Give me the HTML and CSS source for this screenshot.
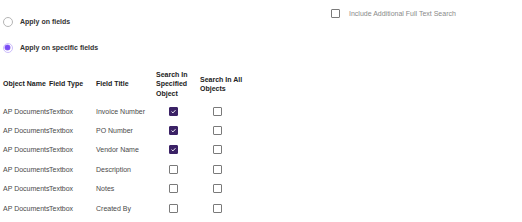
FILE: index.html
```html
<!DOCTYPE html>
<html lang="en">
<head>
    <meta charset="UTF-8">
    <title>Search Fields</title>
    <link rel="stylesheet" href="styles.css">
</head>
<body>
    <div class="page">
        <div class="options-row">
            <div class="radio-group">
                <label class="radio-option"><span class="radio"></span>Apply on fields</label>
                <label class="radio-option"><span class="radio on"></span>Apply on specific fields</label>
            </div>
            <label class="full-text"><span class="box"></span>Include Additional Full Text Search</label>
        </div>

        <table class="fields">
            <thead>
                <tr>
                    <th class="c-name">Object Name</th>
                    <th class="c-type">Field Type</th>
                    <th class="c-title">Field Title</th>
                    <th class="c-spec">Search In<br>Specified<br>Object</th>
                    <th class="c-all">Search In All<br>Objects</th>
                </tr>
            </thead>
            <tbody>
                <tr>
                    <td>AP Documents</td><td>Textbox</td><td>Invoice Number</td>
                    <td><span class="box checked"><svg viewBox="0 0 9 9"><path d="M2 4.6 L3.8 6.3 L7 2.8"/></svg></span></td>
                    <td><span class="box"></span></td>
                </tr>
                <tr>
                    <td>AP Documents</td><td>Textbox</td><td>PO Number</td>
                    <td><span class="box checked"><svg viewBox="0 0 9 9"><path d="M2 4.6 L3.8 6.3 L7 2.8"/></svg></span></td>
                    <td><span class="box"></span></td>
                </tr>
                <tr>
                    <td>AP Documents</td><td>Textbox</td><td>Vendor Name</td>
                    <td><span class="box checked"><svg viewBox="0 0 9 9"><path d="M2 4.6 L3.8 6.3 L7 2.8"/></svg></span></td>
                    <td><span class="box"></span></td>
                </tr>
                <tr>
                    <td>AP Documents</td><td>Textbox</td><td>Description</td>
                    <td><span class="box"></span></td>
                    <td><span class="box"></span></td>
                </tr>
                <tr>
                    <td>AP Documents</td><td>Textbox</td><td>Notes</td>
                    <td><span class="box"></span></td>
                    <td><span class="box"></span></td>
                </tr>
                <tr>
                    <td>AP Documents</td><td>Textbox</td><td>Created By</td>
                    <td><span class="box"></span></td>
                    <td><span class="box"></span></td>
                </tr>
            </tbody>
        </table>
    </div>
</body>
</html>
```

FILE: styles.css
```css
body {
    margin: 0;
    background: #fff;
    font-family: 'Liberation Sans', Arial, sans-serif;
    color: #444;
}

.page {
    padding: 0 0 0 3px;
}

.options-row {
    display: grid;
    grid-template-columns: 328px auto;
    align-items: start;
}

.radio-group {
    display: flex;
    flex-direction: column;
    gap: 16px;
    padding-top: 16.5px;
}

.radio-option {
    display: flex;
    align-items: center;
    height: 10px;
    font-size: 7px;
    font-weight: bold;
    color: #333;
    margin-left: -0.5px;
}

.radio {
    position: relative;
    box-sizing: border-box;
    width: 10px;
    height: 10px;
    margin-right: 7.5px;
    border: 1px solid #b5b5b5;
    border-radius: 50%;
    background: #fff;
}

.radio.on {
    border: 1.5px solid #cdbdfb;
}

.radio.on::after {
    content: "";
    position: absolute;
    left: 1px;
    top: 1px;
    width: 5px;
    height: 5px;
    border-radius: 50%;
    background: #7a4cf5;
    box-shadow: 0 0 0 0.5px #9b7af7;
}

.full-text {
    display: flex;
    align-items: center;
    margin-top: 9px;
    font-size: 7px;
    color: #8a8a8a;
}

.full-text .box {
    margin-right: 9px;
}

.box {
    display: inline-block;
    box-sizing: border-box;
    width: 9px;
    height: 9px;
    border: 1px solid #7a7a7a;
    border-radius: 1px;
    background: #fff;
    vertical-align: middle;
}

.box.checked {
    border-color: #3b2266;
    background: #3b2266;
}

.box svg {
    display: block;
    width: 7px;
    height: 7px;
}

.box svg path {
    fill: none;
    stroke: #fff;
    stroke-width: 1.2;
}

.fields {
    margin-top: 14px;
    border-collapse: collapse;
    table-layout: fixed;
    width: 257px;
    font-size: 7px;
}

.fields th {
    height: 35px;
    padding: 0;
    text-align: left;
    vertical-align: middle;
    line-height: 9.3px;
    font-weight: bold;
    color: #222;
}

.c-name { width: 46px; }
.c-type { width: 47px; }
.c-title { width: 60px; }
.c-spec { width: 44px; }
.c-all { width: 60px; }

.fields td {
    height: 19.4px;
    padding: 0;
    vertical-align: middle;
    white-space: nowrap;
    color: #4a4a4a;
}

.fields td .box {
    margin-left: 13px;
}
```
